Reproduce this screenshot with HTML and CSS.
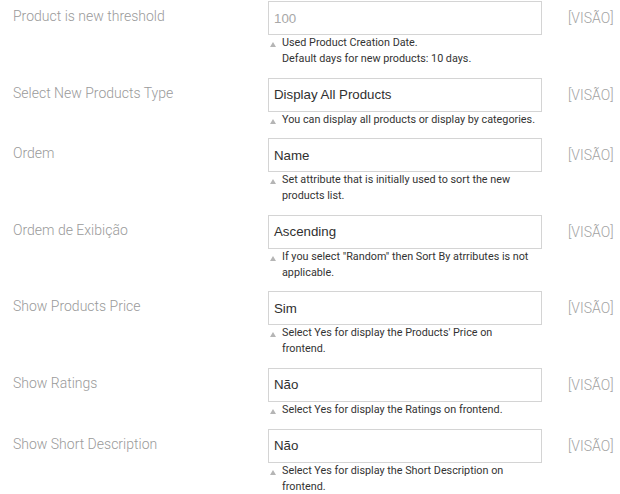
FILE: index.html
```html
<!DOCTYPE html>
<html lang="pt">
<head>
<meta charset="utf-8">
<title>New Products Settings</title>
<link rel="stylesheet" href="styles.css">
</head>
<body>
<div class="form">
  <div class="row">
    <div class="label">Product is new threshold</div>
    <div class="field">
      <input class="control" type="text" placeholder="100">
      <div class="note"><span class="tri"></span><span class="note-text">Used Product Creation Date.<br>Default days for new products: 10 days.</span></div>
    </div>
    <div class="scope">[VISÃO]</div>
  </div>
  <div class="row">
    <div class="label">Select New Products Type</div>
    <div class="field">
      <div class="control">Display All Products</div>
      <div class="note"><span class="tri"></span><span class="note-text">You can display all products or display by categories.</span></div>
    </div>
    <div class="scope">[VISÃO]</div>
  </div>
  <div class="row">
    <div class="label">Ordem</div>
    <div class="field">
      <div class="control">Name</div>
      <div class="note"><span class="tri"></span><span class="note-text">Set attribute that is initially used to sort the new products list.</span></div>
    </div>
    <div class="scope">[VISÃO]</div>
  </div>
  <div class="row">
    <div class="label">Ordem de Exibição</div>
    <div class="field">
      <div class="control">Ascending</div>
      <div class="note"><span class="tri"></span><span class="note-text">If you select "Random" then Sort By atrributes is not applicable.</span></div>
    </div>
    <div class="scope">[VISÃO]</div>
  </div>
  <div class="row">
    <div class="label">Show Products Price</div>
    <div class="field">
      <div class="control">Sim</div>
      <div class="note"><span class="tri"></span><span class="note-text">Select Yes for display the Products' Price on frontend.</span></div>
    </div>
    <div class="scope">[VISÃO]</div>
  </div>
  <div class="row">
    <div class="label">Show Ratings</div>
    <div class="field">
      <div class="control">Não</div>
      <div class="note"><span class="tri"></span><span class="note-text">Select Yes for display the Ratings on frontend.</span></div>
    </div>
    <div class="scope">[VISÃO]</div>
  </div>
  <div class="row">
    <div class="label">Show Short Description</div>
    <div class="field">
      <div class="control">Não</div>
      <div class="note"><span class="tri"></span><span class="note-text">Select Yes for display the Short Description on frontend.</span></div>
    </div>
    <div class="scope">[VISÃO]</div>
  </div>
</div>
</body>
</html>
```
FILE: styles.css
```css
html, body {
  margin: 0;
  padding: 0;
  background: #ffffff;
}

.form {
  padding: 1px 0 0 13px;
  font-family: Roboto, "Liberation Sans", sans-serif;
}

.row {
  display: grid;
  grid-template-columns: 255px 274px auto;
  margin-bottom: 10.6px;
}

.label,
.scope {
  font-family: Roboto, sans-serif;
  font-weight: 300;
  font-size: 14px;
  line-height: 20px;
  padding-top: 5px;
  color: #9a9a9a;
}

.scope {
  padding-top: 7px;
  padding-left: 26px;
  color: #a3a3a3;
}

.control {
  box-sizing: border-box;
  display: flex;
  align-items: center;
  width: 274px;
  height: 34px;
  margin: 0;
  padding: 0 5px;
  border: 1px solid #d4d4d4;
  border-radius: 0;
  background: #fff;
  font-family: "Liberation Sans", Arial, sans-serif;
  font-size: 13.3px;
  color: #303030;
  outline: none;
}

.control::placeholder {
  color: #a8a8a8;
}

.note {
  display: flex;
  align-items: flex-start;
  font-family: Roboto, sans-serif;
  font-size: 10.8px;
  line-height: 16px;
  color: #333333;
}

.tri {
  flex: none;
  width: 0;
  height: 0;
  margin: 7px 6px 0 2px;
  border-left: 3px solid transparent;
  border-right: 3px solid transparent;
  border-bottom: 5px solid #b5b5b5;
}

.note-text {
  width: 255px;
}
```
